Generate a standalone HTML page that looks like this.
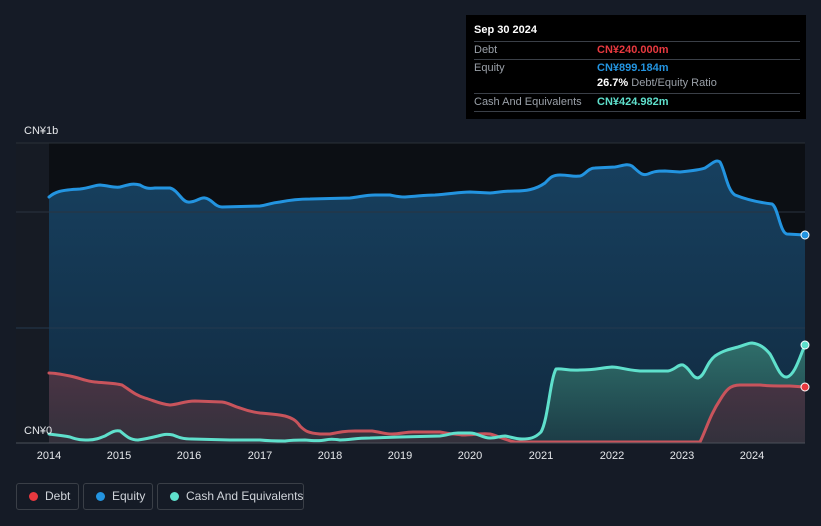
<!DOCTYPE html>
<html><head><meta charset="utf-8"><style>
html,body{margin:0;width:821px;height:526px;overflow:hidden}
body{background:#151b26;font-family:"Liberation Sans",sans-serif;position:relative}
.tt{position:absolute;left:466px;top:15px;width:340px;height:104px;background:#000;color:#fff;font-size:11px}
.row{position:absolute;left:8px;right:6px;border-top:1px solid #3a3f47;height:18px;line-height:17px}
.row span{position:absolute;left:123px;font-weight:bold}
.lab{color:#9aa0a8}
.leg{position:absolute;top:483px;height:27px;border:1px solid #3a3f47;border-radius:3px;color:#d0d4da;font-size:12px;line-height:25px;box-sizing:border-box;white-space:nowrap}
.leg i{position:absolute;left:12px;top:8px;width:9px;height:9px;border-radius:50%}
.ax{position:absolute;top:450px;color:#e6e8eb;font-size:11px;transform:translateX(-50%)}
</style></head><body>
<svg width="821" height="526" style="position:absolute;left:0;top:0">
<rect x="16" y="143" width="789" height="300" fill="#0c0f14"/>
<defs>
<linearGradient id="eq" x1="0" y1="0" x2="0" y2="1"><stop offset="0" stop-color="#17405f"/><stop offset="1" stop-color="#112a40"/></linearGradient>
<linearGradient id="ca" x1="0" y1="0" x2="0" y2="1"><stop offset="0" stop-color="#2f6e6a"/><stop offset="1" stop-color="#1c3c46"/></linearGradient>
<linearGradient id="de" x1="0" y1="0" x2="0" y2="1"><stop offset="0" stop-color="#4a3444"/><stop offset="1" stop-color="#33313c"/></linearGradient>
</defs>
<rect x="16" y="143" width="33" height="300" fill="#161b24"/>
<path d="M49,197 C55,192 60,190 80,189 C90,188 95,185 100,185 C110,186 115,188 120,187 C128,185 132,183 140,185 C145,188 148,189 155,188 L170,188 C178,190 182,202 188,202 C195,203 200,197 205,198 C212,199 215,207 222,207 L260,206 C268,205 270,203 280,202 C290,200 300,199 310,199 L350,198 C360,197 365,195 375,195 L390,195 C395,196 398,197 405,197 C420,196 425,195 435,195 C450,194 460,192 470,192 L490,193 C500,192 505,191 515,191 C525,191 535,190 545,183 C550,178 552,175 560,175 C570,175 572,177 580,176 C585,175 588,168 595,168 L615,167 C622,166 627,163 632,166 C640,173 642,176 648,174 C653,172 655,171 665,171 L680,172 C690,171 700,170 705,168 C713,163 716,159 720,162 C725,170 727,190 735,195 C745,199 755,202 772,204 C778,207 780,233 787,234 L805,235 L805,443 L49,443 Z" fill="url(#eq)"/>
<line x1="16" y1="143" x2="805" y2="143" stroke="#2a3038"/>
<line x1="16" y1="212" x2="805" y2="212" stroke="#2a3340"/>
<line x1="16" y1="328" x2="805" y2="328" stroke="#24384e"/>
<path d="M49,434 C55,435 60,435 70,437 C78,440 82,440 88,440 C95,440 100,438 105,436 C112,432 115,430 120,431 C126,436 130,440 138,440 C145,439 150,438 158,436 C165,434 168,434 173,435 C178,437 182,439 192,439 L230,440 L260,440 C270,441 275,441 285,441 C292,440 296,440 305,440 C315,441 320,441 325,440 C330,439 333,439 340,440 C350,440 355,438 370,438 L400,437 L440,436 C450,435 450,433 458,433 L470,433 C478,433 482,438 490,438 C497,438 500,436 505,436 C512,437 515,439 522,439 C530,439 535,438 541,432 C548,420 550,380 556,369 C562,368 568,371 580,370 C595,370 600,368 612,367 C620,367 625,370 640,371 L668,371 C675,370 678,364 683,365 C690,368 692,378 698,378 C705,376 706,363 715,356 C722,351 730,349 738,347 C745,345 748,343 752,343 C760,344 765,348 770,354 C776,364 780,378 787,377 C795,375 800,356 805,345 L805,443 L49,443 Z" fill="url(#ca)"/>
<path d="M49,373 C55,373 60,374 70,376 C80,378 85,381 95,382 C105,383 115,383 122,385 C130,390 135,395 145,398 C155,401 160,404 170,405 C180,404 185,401 195,401 L222,402 C230,403 232,406 240,408 C248,411 252,412 260,413 C270,414 275,414 285,416 C292,418 296,420 300,426 C305,431 308,433 320,434 L330,434 C340,432 345,431 355,431 L372,431 C380,432 385,434 392,434 C400,434 405,432 413,432 L440,432 C450,434 455,434 462,435 C475,435 480,433 490,434 C498,436 505,440 515,442 L700,442 C706,430 710,415 720,400 C726,390 730,385 740,385 L760,385 C768,386 775,386 790,386 L805,387 L805,443 L49,443 Z" fill="url(#de)"/>
<g fill="none" stroke-width="3" stroke-linejoin="round" stroke-linecap="round">
<path d="M49,197 C55,192 60,190 80,189 C90,188 95,185 100,185 C110,186 115,188 120,187 C128,185 132,183 140,185 C145,188 148,189 155,188 L170,188 C178,190 182,202 188,202 C195,203 200,197 205,198 C212,199 215,207 222,207 L260,206 C268,205 270,203 280,202 C290,200 300,199 310,199 L350,198 C360,197 365,195 375,195 L390,195 C395,196 398,197 405,197 C420,196 425,195 435,195 C450,194 460,192 470,192 L490,193 C500,192 505,191 515,191 C525,191 535,190 545,183 C550,178 552,175 560,175 C570,175 572,177 580,176 C585,175 588,168 595,168 L615,167 C622,166 627,163 632,166 C640,173 642,176 648,174 C653,172 655,171 665,171 L680,172 C690,171 700,170 705,168 C713,163 716,159 720,162 C725,170 727,190 735,195 C745,199 755,202 772,204 C778,207 780,233 787,234 L805,235" stroke="#2394e0"/>
<path d="M49,373 C55,373 60,374 70,376 C80,378 85,381 95,382 C105,383 115,383 122,385 C130,390 135,395 145,398 C155,401 160,404 170,405 C180,404 185,401 195,401 L222,402 C230,403 232,406 240,408 C248,411 252,412 260,413 C270,414 275,414 285,416 C292,418 296,420 300,426 C305,431 308,433 320,434 L330,434 C340,432 345,431 355,431 L372,431 C380,432 385,434 392,434 C400,434 405,432 413,432 L440,432 C450,434 455,434 462,435 C475,435 480,433 490,434 C498,436 505,440 515,442 L700,442 C706,430 710,415 720,400 C726,390 730,385 740,385 L760,385 C768,386 775,386 790,386 L805,387" stroke="#c8545c"/>
<path d="M49,434 C55,435 60,435 70,437 C78,440 82,440 88,440 C95,440 100,438 105,436 C112,432 115,430 120,431 C126,436 130,440 138,440 C145,439 150,438 158,436 C165,434 168,434 173,435 C178,437 182,439 192,439 L230,440 L260,440 C270,441 275,441 285,441 C292,440 296,440 305,440 C315,441 320,441 325,440 C330,439 333,439 340,440 C350,440 355,438 370,438 L400,437 L440,436 C450,435 450,433 458,433 L470,433 C478,433 482,438 490,438 C497,438 500,436 505,436 C512,437 515,439 522,439 C530,439 535,438 541,432 C548,420 550,380 556,369 C562,368 568,371 580,370 C595,370 600,368 612,367 C620,367 625,370 640,371 L668,371 C675,370 678,364 683,365 C690,368 692,378 698,378 C705,376 706,363 715,356 C722,351 730,349 738,347 C745,345 748,343 752,343 C760,344 765,348 770,354 C776,364 780,378 787,377 C795,375 800,356 805,345" stroke="#5fe0cc"/>
</g>
<line x1="16" y1="443" x2="805" y2="443" stroke="#4a5059"/>
<circle cx="805" cy="235" r="4" fill="#2394e0" stroke="#fff" stroke-width="1"/>
<circle cx="805" cy="345" r="4" fill="#5fe0cc" stroke="#fff" stroke-width="1"/>
<circle cx="805" cy="387" r="4" fill="#e8393f" stroke="#fff" stroke-width="1"/>
</svg>
<div style="position:absolute;left:24px;top:125px;color:#e6e8eb;font-size:11px">CN¥1b</div>
<div style="position:absolute;left:24px;top:425px;color:#e6e8eb;font-size:11px">CN¥0</div>
<div class="ax" style="left:49px">2014</div><div class="ax" style="left:119px">2015</div><div class="ax" style="left:189px">2016</div><div class="ax" style="left:260px">2017</div><div class="ax" style="left:330px">2018</div><div class="ax" style="left:400px">2019</div><div class="ax" style="left:470px">2020</div><div class="ax" style="left:541px">2021</div><div class="ax" style="left:612px">2022</div><div class="ax" style="left:682px">2023</div><div class="ax" style="left:752px">2024</div>
<div class="tt">
<div style="position:absolute;left:8px;top:9px;font-weight:bold">Sep 30 2024</div>
<div class="row lab" style="top:26px">Debt<span style="color:#e8393f">CN¥240.000m</span></div>
<div class="row lab" style="top:44px">Equity<span style="color:#2394e0">CN¥899.184m</span></div>
<div style="position:absolute;left:131px;top:62px;color:#9aa0a8"><b style="color:#fff">26.7%</b> Debt/Equity Ratio</div>
<div class="row lab" style="top:78px">Cash And Equivalents<span style="color:#5fe0cc">CN¥424.982m</span></div>
<div class="row" style="top:96px"></div>
</div>
<div class="leg" style="left:16px;width:63px"><i style="background:#e8393f"></i><span style="position:absolute;left:28px">Debt</span></div>
<div class="leg" style="left:83px;width:70px"><i style="background:#2394e0"></i><span style="position:absolute;left:28px">Equity</span></div>
<div class="leg" style="left:157px;width:147px"><i style="background:#5fe0cc"></i><span style="position:absolute;left:28px">Cash And Equivalents</span></div>
</body></html>
